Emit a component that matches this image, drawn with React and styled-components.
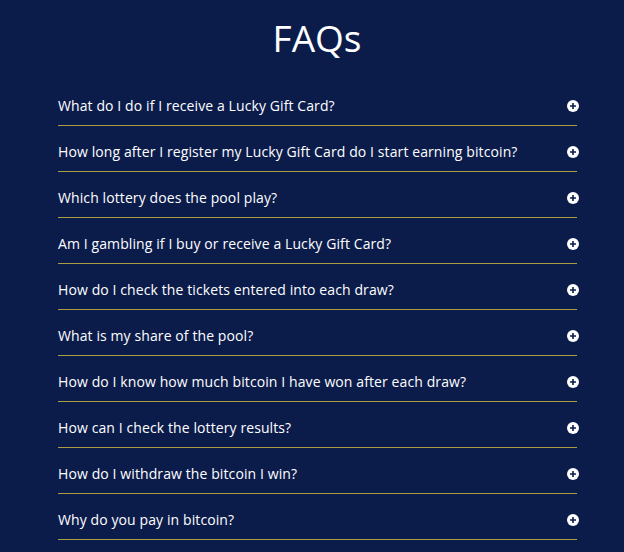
import React from 'react';
import styled, { createGlobalStyle } from 'styled-components';

const GlobalStyle = createGlobalStyle`
  html, body {
    margin: 0;
    padding: 0;
    background: #0b1c4b;
  }
  body {
    font-family: "Open Sans", "Noto Sans", sans-serif;
  }
`;

const Page = styled.div`
  width: 624px;
  height: 552px;
  overflow: hidden;
  background: #0b1c4b;
  color: #ffffff;
`;

const Title = styled.h1`
  margin: 0;
  padding: 16px 0 0 10px;
  height: 80px;
  box-sizing: border-box;
  text-align: center;
  font-size: 37px;
  font-weight: 400;
  line-height: 44px;
`;

const List = styled.div`
  margin-left: 58px;
  width: 519px;
  display: flex;
  flex-direction: column;
`;

const Row = styled.div`
  display: flex;
  align-items: center;
  justify-content: space-between;
  height: 46px;
  padding-top: 6px;
  box-sizing: border-box;
  border-bottom: 1px solid #ab9c45;
`;

const Question = styled.span`
  font-size: 14px;
  line-height: 20px;
  letter-spacing: 0.1px;
`;

const IconWrap = styled.span`
  display: flex;
  margin-right: -2px;
`;

const PlusIcon = () => (
  <svg width="12" height="12" viewBox="0 0 12 12">
    <circle cx="6" cy="6" r="6" fill="#ffffff" />
    <path d="M6 3v6M3 6h6" stroke="#0b1c4b" strokeWidth="1.6" />
  </svg>
);

const questions = [
  'What do I do if I receive a Lucky Gift Card?',
  'How long after I register my Lucky Gift Card do I start earning bitcoin?',
  'Which lottery does the pool play?',
  'Am I gambling if I buy or receive a Lucky Gift Card?',
  'How do I check the tickets entered into each draw?',
  'What is my share of the pool?',
  'How do I know how much bitcoin I have won after each draw?',
  'How can I check the lottery results?',
  'How do I withdraw the bitcoin I win?',
  'Why do you pay in bitcoin?',
];

export default function App() {
  return (
    <Page>
      <GlobalStyle />
      <Title>FAQs</Title>
      <List>
        {questions.map((q) => (
          <Row key={q}>
            <Question>{q}</Question>
            <IconWrap>
              <PlusIcon />
            </IconWrap>
          </Row>
        ))}
      </List>
    </Page>
  );
}
